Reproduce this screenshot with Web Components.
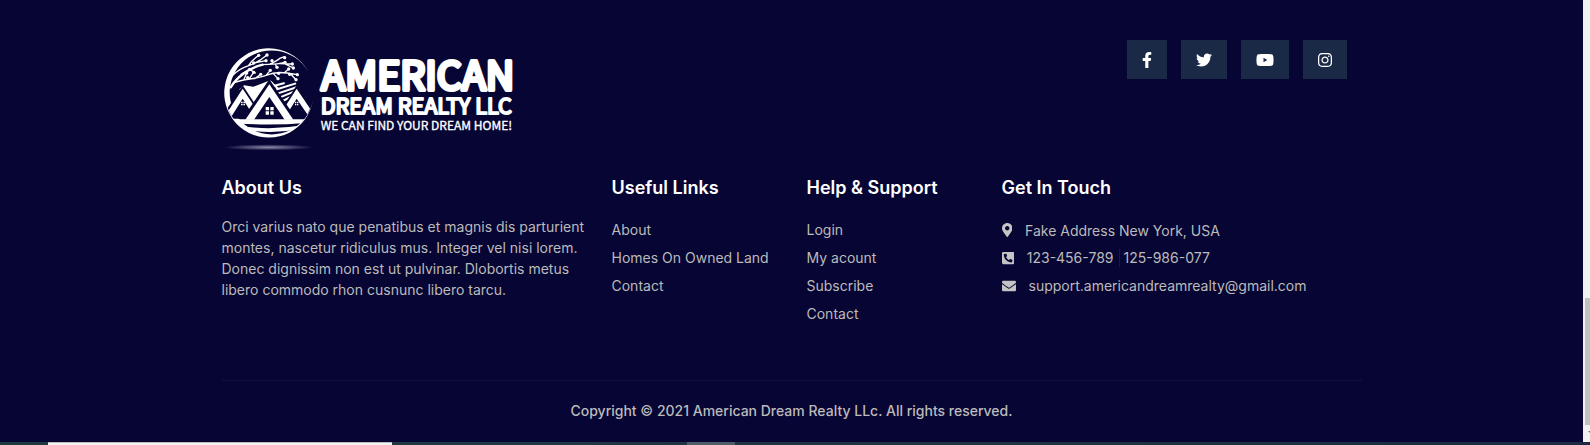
<!DOCTYPE html>
<html lang="en">
<head>
<meta charset="utf-8">
<title>American Dream Realty LLC</title>
<style>
  html, body { margin: 0; }
  body { background: #070533; font-family: Inter, "Liberation Sans", sans-serif; }
</style>
</head>
<body>
<page-shell>
  <site-footer>
    <brand-logo slot="brand"></brand-logo>
    <social-links slot="social"></social-links>
    <footer-column slot="columns" heading="About Us">
      <p>Orci varius nato que penatibus et magnis dis parturient montes, nascetur ridiculus mus. Integer vel nisi lorem. Donec dignissim non est ut pulvinar. Dlobortis metus libero commodo rhon cusnunc libero tarcu.</p>
    </footer-column>
    <footer-column slot="columns" heading="Useful Links">
      <footer-link>About</footer-link>
      <footer-link>Homes On Owned Land</footer-link>
      <footer-link>Contact</footer-link>
    </footer-column>
    <footer-column slot="columns" heading="Help &amp; Support">
      <footer-link>Login</footer-link>
      <footer-link>My acount</footer-link>
      <footer-link>Subscribe</footer-link>
      <footer-link>Contact</footer-link>
    </footer-column>
    <footer-column slot="columns" heading="Get In Touch">
      <contact-line icon="pin">Fake Address New York, USA</contact-line>
      <contact-line icon="phone"><phone-pair first="123-456-789" second="125-986-077"></phone-pair></contact-line>
      <contact-line icon="mail"><footer-link href="mailto:support.americandreamrealty@gmail.com">support.americandreamrealty@gmail.com</footer-link></contact-line>
    </footer-column>
    <span slot="copyright">Copyright © 2021 American Dream Realty LLc. All rights reserved.</span>
  </site-footer>
  <scroll-rail slot="rail"></scroll-rail>
  <task-strip slot="strip"></task-strip>
</page-shell>

<script>
const ICONS = {
  facebook: [320, 512, 'M279.14 288l14.22-92.66h-88.91v-60.13c0-25.35 12.42-50.06 52.24-50.06h40.42V6.26S260.43 0 225.36 0c-73.22 0-121.08 44.38-121.08 124.72v70.62H22.89V288h81.39v224h100.17V288z'],
  twitter: [512, 512, 'M459.37 151.716c.325 4.548.325 9.097.325 13.645 0 138.72-105.583 298.558-298.558 298.558-59.452 0-114.68-17.219-161.137-47.106 8.447.974 16.568 1.299 25.34 1.299 49.055 0 94.213-16.568 130.274-44.832-46.132-.975-84.792-31.188-98.112-72.772 6.498.974 12.995 1.624 19.818 1.624 9.421 0 18.843-1.3 27.614-3.573-48.081-9.747-84.143-51.98-84.143-102.985v-1.299c13.969 7.797 30.214 12.67 47.431 13.319-28.264-18.843-46.781-51.005-46.781-87.391 0-19.492 5.197-37.36 14.294-52.954 51.655 63.675 129.3 105.258 216.365 109.807-1.624-7.797-2.599-15.918-2.599-24.04 0-57.828 46.782-104.934 104.934-104.934 30.213 0 57.502 12.67 76.67 33.137 23.715-4.548 46.456-13.32 66.599-25.34-7.798 24.366-24.366 44.833-46.132 57.827 21.117-2.273 41.584-8.122 60.426-16.243-14.292 20.791-32.161 39.308-52.628 54.253z'],
  youtube: [576, 512, 'M549.655 124.083c-6.281-23.65-24.787-42.276-48.284-48.597C458.781 64 288 64 288 64S117.22 64 74.629 75.486c-23.497 6.322-42.003 24.947-48.284 48.597-11.412 42.867-11.412 132.305-11.412 132.305s0 89.438 11.412 132.305c6.281 23.65 24.787 41.5 48.284 47.821C117.22 448 288 448 288 448s170.78 0 213.371-11.486c23.497-6.321 42.003-24.171 48.284-47.821 11.412-42.867 11.412-132.305 11.412-132.305s0-89.438-11.412-132.305zM240 326V187l122 69.500z'],
  instagram: [448, 512, 'M224.1 141c-63.6 0-114.9 51.3-114.9 114.9s51.3 114.9 114.9 114.9S339 319.5 339 255.9 287.7 141 224.1 141zm0 189.6c-41.1 0-74.7-33.5-74.7-74.7s33.5-74.7 74.7-74.7 74.7 33.5 74.7 74.7-33.6 74.7-74.7 74.7zm146.4-194.3c0 14.9-12 26.8-26.8 26.8-14.9 0-26.8-12-26.8-26.8s12-26.8 26.8-26.8 26.8 12 26.8 26.8zm76.1 27.2c-1.7-35.9-9.9-67.7-36.2-93.9-26.2-26.2-58-34.4-93.9-36.2-37-2.1-147.9-2.1-184.9 0-35.8 1.7-67.6 9.9-93.9 36.1s-34.4 58-36.2 93.9c-2.1 37-2.1 147.9 0 184.9 1.7 35.9 9.9 67.7 36.2 93.9s58 34.4 93.9 36.2c37 2.1 147.9 2.1 184.9 0 35.9-1.7 67.7-9.9 93.9-36.2 26.2-26.2 34.4-58 36.2-93.9 2.1-37 2.1-147.8 0-184.8zM398.8 388c-7.8 19.6-22.9 34.7-42.6 42.6-29.5 11.7-99.5 9-132.1 9s-102.7 2.6-132.1-9c-19.6-7.8-34.7-22.9-42.6-42.6-11.7-29.5-9-99.5-9-132.1s-2.6-102.7 9-132.1c7.8-19.6 22.9-34.7 42.6-42.6 29.5-11.7 99.5-9 132.1-9s102.7-2.6 132.1 9c19.6 7.8 34.7 22.9 42.6 42.6 11.7 29.5 9 99.5 9 132.1s2.7 102.7-9 132.1z'],
  pin: [384, 512, 'M172.268 501.67C26.97 291.031 0 269.413 0 192 0 85.961 85.961 0 192 0s192 85.961 192 192c0 77.413-26.97 99.031-172.268 309.67-9.535 13.774-29.93 13.773-39.464 0zM192 272c44.183 0 80-35.817 80-80s-35.817-80-80-80-80 35.817-80 80 35.817 80 80 80z'],
  phone: [448, 512, 'M400 32H48A48 48 0 0 0 0 80v352a48 48 0 0 0 48 48h352a48 48 0 0 0 48-48V80a48 48 0 0 0-48-48zm-16.39 307.37l-15 65A15 15 0 0 1 354 416C194 416 64 286.29 64 126a15.7 15.7 0 0 1 11.63-14.61l65-15A18.23 18.23 0 0 1 144 96a16.27 16.27 0 0 1 13.79 9.09l30 70A17.9 17.9 0 0 1 189 181a17 17 0 0 1-5.5 11.61l-37.89 31a231.91 231.91 0 0 0 110.78 110.78l31-37.89A17 17 0 0 1 299 291a17.85 17.85 0 0 1 5.91 1.21l70 30A16.25 16.25 0 0 1 384 336a17.41 17.41 0 0 1-.39 3.37z'],
  mail: [512, 512, 'M502.3 190.8c3.9-3.1 9.7-.2 9.7 4.7V400c0 26.5-21.5 48-48 48H48c-26.5 0-48-21.5-48-48V195.6c0-5 5.7-7.8 9.7-4.7 22.4 17.4 52.1 39.5 154.1 113.6 21.1 15.4 56.7 47.8 92.2 47.6 35.7.3 72-32.8 92.3-47.6 102-74.1 131.6-96.3 154-113.7zM256 320c23.2.4 56.6-29.2 73.4-41.4 132.7-96.3 142.8-104.7 173.4-128.7 5.8-4.5 9.2-11.5 9.2-18.9v-19c0-26.5-21.5-48-48-48H48c-26.5 0-48 21.5-48 48v19c0 7.4 3.4 14.3 9.2 18.9 30.6 23.9 40.7 32.4 173.4 128.7 16.8 12.2 50.2 41.8 73.4 41.4z']
};
const icon = (name) => {
  const [w, h, d] = ICONS[name];
  return `<svg viewBox="0 0 ${w} ${h}" aria-hidden="true"><path fill-rule="evenodd" d="${d}"/></svg>`;
};
const define = (name, render) => customElements.define(name, class extends HTMLElement {
  connectedCallback() {
    if (!this.shadowRoot) this.attachShadow({ mode: 'open' }).innerHTML = render(this);
  }
});

define('page-shell', () => `
  <style>
    :host { display: flex; flex-direction: column; min-height: 100vh; }
    .view { flex: 1; display: flex; }
    main { flex: 1; display: flex; flex-direction: column; }
  </style>
  <div class="view"><main><slot></slot></main><slot name="rail"></slot></div>
  <slot name="strip"></slot>`);

define('site-footer', () => `
  <style>
    :host { display: block; color: #bbb; font-size: 14px; }
    footer { max-width: 1140px; margin: 0 auto; padding: 40px 15px 20px; }
    .top { display: flex; justify-content: space-between; align-items: flex-start; }
    .columns { display: grid; grid-template-columns: 2fr 1fr 1fr 2fr; margin: 20px -30px 52px 0; }
    .copy { border-top: 1px solid #14123c; padding: 20px 0 0; text-align: center; line-height: 20px; font-weight: 500; }
  </style>
  <footer>
    <div class="top"><slot name="brand"></slot><slot name="social"></slot></div>
    <div class="columns"><slot name="columns"></slot></div>
    <div class="copy"><slot name="copyright"></slot></div>
  </footer>`);

define('social-links', () => `
  <style>
    :host { display: block; margin-right: 15px; }
    nav { display: flex; gap: 14px; }
    a { display: flex; align-items: center; height: 39px; padding: 0 15px; background: #1a2946; }
    svg { display: block; height: 16px; fill: #fff; }
  </style>
  <nav aria-label="Social media">
    ${['facebook', 'twitter', 'youtube', 'instagram'].map(n => `<a href="#${n}" aria-label="${n}">${icon(n)}</a>`).join('')}
  </nav>`);

define('footer-column', (el) => `
  <style>
    :host { display: block; min-width: 0; padding-right: 15px; }
    h4 { margin: 0 0 15px; color: #fff; font-size: 18px; font-weight: 600; line-height: 26px; }
    .body { line-height: 21px; }
    ::slotted(p) { margin: 0; }
  </style>
  <h4>${el.getAttribute('heading').replace('&', '&amp;')}</h4>
  <div class="body"><slot></slot></div>`);

define('footer-link', (el) => `
  <style>
    :host { display: block; line-height: 28px; }
    a { color: inherit; text-decoration: none; white-space: nowrap; }
  </style>
  <a href="${el.getAttribute('href') || '#'}"><slot></slot></a>`);

define('contact-line', (el) => `
  <style>
    :host { display: flex; align-items: center; gap: 13px; min-height: 28px; white-space: nowrap; }
    svg { display: block; height: 14px; fill: #c4c4c4; }
  </style>
  ${icon(el.getAttribute('icon'))}<slot></slot>`);

define('phone-pair', (el) => `
  <style>
    :host { display: flex; align-items: baseline; line-height: 18px; }
    a { color: inherit; text-decoration: none; }
    a + a { margin-left: 5px; padding-left: 4px; border-left: 1px solid #1c1a38; }
  </style>
  <a href="tel:${el.getAttribute('first')}">${el.getAttribute('first')}</a><a href="tel:${el.getAttribute('second')}">${el.getAttribute('second')}</a>`);

define('brand-logo', () => {
  const blossoms = [[128,46],[153,45],[150,62],[168,62],[113,69],[206,53],[207,67],[229,72],[232,84],[218,87],[183,82],[92,99],[113,97],[134,103],[163,91],[188,100],[186,116],[221,103],[244,104],[240,119],[101,88],[95,113]];
  return `
  <style>
    :host { display: block; }
    svg { display: block; width: 300px; height: 115px; }
    text { font-family: "Noto Sans CJK SC", "Liberation Sans", sans-serif; font-weight: 400; fill: #fff; stroke: #fff; stroke-linejoin: round; }
  </style>
  <svg viewBox="18 0 900 345" role="img" aria-label="American Dream Realty LLC">
    <defs>
      <radialGradient id="glow"><stop offset="0" stop-color="#8d8ba6"/><stop offset=".5" stop-color="#4a4870"/><stop offset="1" stop-color="#070533"/></radialGradient>
      <clipPath id="disc"><circle cx="159" cy="158" r="132"/></clipPath>
    </defs>
    <ellipse cx="158" cy="322" rx="134" ry="9" fill="url(#glow)"/>
    <path fill="#fff" d="M276 94A134 134 0 1 0 291 180A126 126 0 1 1 276 94z"/>
    <g fill="none" stroke="#fff" stroke-width="4" stroke-linecap="round">
      <path stroke-width="7" d="M44 142C62 112 98 84 140 74"/>
      <path d="M46 110C62 92 80 82 100 76S140 56 153 45M98 76Q108 60 128 46M120 68L150 62M138 74C158 72 176 76 206 67M162 72Q184 62 193 54L206 50M178 73L183 82M190 71L229 72M204 70L232 84"/>
      <path d="M54 128C84 116 120 118 150 106S200 96 244 104M84 118L92 99M100 116L113 97M116 116L134 103M150 106L163 91M172 101L186 116M205 98L218 87M222 100L240 119M75 103L101 88L118 99"/>
    </g>
    <g fill="#fff">${blossoms.map(([x, y]) => `<circle cx="${x}" cy="${y}" r="5"/>`).join('')}</g>
    <g clip-path="url(#disc)">
      <path fill="#fff" d="M70 148L84 136L112 140L136 131L162 121L172 128L146 180L100 196z"/>
      <path fill="none" stroke="#fff" stroke-width="6" d="M164 126L188 148M176 150L240 130M184 161L244 141M192 172L234 155M200 183L224 171M170 139L206 129"/>
      <g stroke-linejoin="miter">
        <path fill="#070533" d="M80 136L146 236H14z"/>
        <path fill="#fff" d="M80 146L140 236H118L80 176L42 236H22z"/>
        <path fill="#070533" d="M242 136L310 236H178z"/>
        <path fill="#fff" d="M242 146L300 232H280L242 176L204 236H184z"/>
        <path fill="#070533" d="M160 118L246 244H74z"/>
        <path fill="#fff" d="M160 133L232 239H206L160 171L114 239H88z"/>
      </g>
      <g fill="#fff">
        <path d="M149 201h10v10h-10zM163 201h10v10h-10zM149 214h10v10h-10zM163 214h10v10h-10z"/>
        <path d="M75 185h5v5h-5zM82 185h5v5h-5zM75 192h5v4h-5zM82 192h5v4h-5zM237 185h4v5h-4zM243 185h4v5h-4zM237 192h4v4h-4zM243 192h4v4h-4z"/>
        <path d="M30 238H290L278 248Q160 258 62 250zM74 258Q160 272 262 256L250 268Q160 284 82 268z"/>
      </g>
    </g>
    <text x="316" y="149" font-size="118" stroke-width="12">AMERICAN</text>
    <text x="314" y="221" font-size="65" stroke-width="6">DREAM REALTY LLC</text>
    <text x="314" y="270" font-size="36" stroke-width="1">WE CAN FIND YOUR DREAM HOME!</text>
  </svg>`;
});

define('scroll-rail', () => `
  <style>
    :host { display: grid; grid-template-rows: 298fr 127fr 17fr; width: 7px; background: #f1f1f1; }
    .thumb { grid-row: 2; margin-left: 2px; background: #c1c1c1; }
    svg { grid-row: 3; width: 7px; height: 17px; fill: #777; }
  </style>
  <div class="thumb"></div><svg viewBox="0 0 7 17" aria-hidden="true"><path d="M5 6h2v2z"/></svg>`);

define('task-strip', () => `
  <style>
    :host { display: grid; grid-template-columns: 48fr 344fr 295fr 48fr 855fr; height: 3px; background: linear-gradient(90deg, #203a42, #1f3542 60%, #1c2b42); }
    .field { grid-column: 2; background: #f3f3f3; border-top: 1px solid #bbb; }
    .active { grid-column: 4; background: #4d5d66; }
  </style>
  <div class="field"></div><div class="active"></div>`);
</script>
</body>
</html>
